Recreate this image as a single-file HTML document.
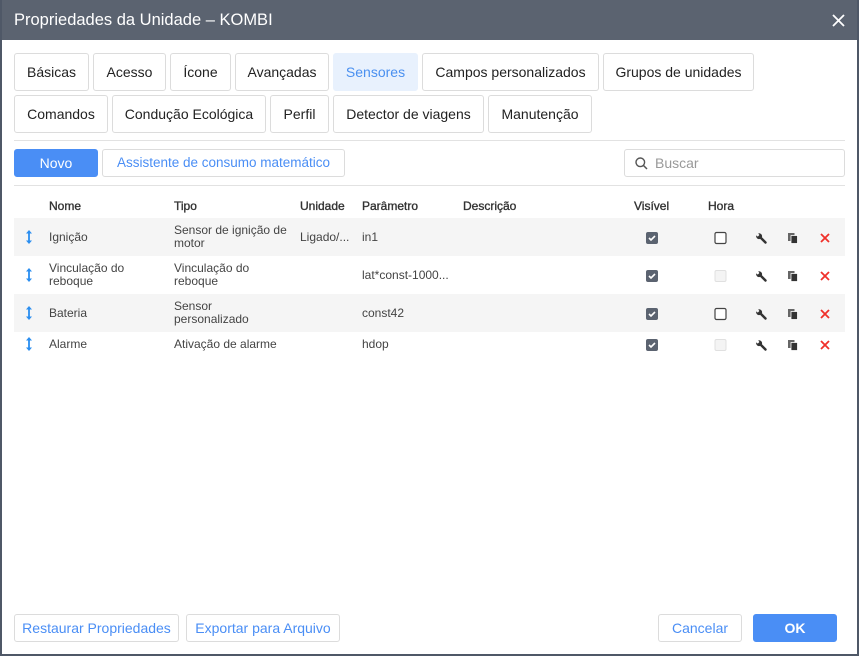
<!DOCTYPE html>
<html><head><meta charset="utf-8"><style>
*{box-sizing:border-box;margin:0;padding:0}
body{width:859px;height:656px;background:#fff;font-family:"Liberation Sans",sans-serif;position:relative;overflow:hidden}
.frame{position:absolute;left:0;top:0;width:859px;height:656px;border:2px solid #4f5867;border-top:none}
.title{position:absolute;left:0;top:0;width:859px;height:40px;background:#5b6370;color:#fff;font-size:16.5px;line-height:40px;padding-left:14px}
.b{position:absolute;border:1px solid #dcdcdc;border-radius:3px;background:#fff;font-size:14px;color:#222;text-align:center}
.t1{top:53px;height:38px;line-height:36px}
.t2{top:95px;height:38px;line-height:36px}
.act{background:#e8f1fd;border-color:#e8f1fd;color:#4a90f0}
.hr{position:absolute;left:14px;width:831px;height:1px;background:#e2e2e2}
.sm{top:149px;height:28px;line-height:26px;font-size:14px}
.blue{background:#4a8ef5;border-color:#4a8ef5;color:#fff}
.lnk{color:#4a8ef5}
.h{position:absolute;top:199px;font-size:12px;color:#333;-webkit-text-stroke:0.35px #333}
.row{position:absolute;left:14px;width:831px}
.g{background:#f5f5f5}
.c{position:absolute;font-size:12px;color:#444;line-height:13px}
</style></head><body>
<div class="title">Propriedades da Unidade – KOMBI</div>
<svg style="position:absolute;left:832px;top:14px" width="13" height="13"><path d="M1,1 L12,12 M12,1 L1,12" stroke="#fff" stroke-width="1.8"/></svg>
<div class="frame"></div>

<div class="b t1" style="left:14px;width:75px">Básicas</div>
<div class="b t1" style="left:93px;width:73px">Acesso</div>
<div class="b t1" style="left:170px;width:61px">Ícone</div>
<div class="b t1" style="left:235px;width:94px">Avançadas</div>
<div class="b t1 act" style="left:333px;width:85px">Sensores</div>
<div class="b t1" style="left:422px;width:177px">Campos personalizados</div>
<div class="b t1" style="left:603px;width:151px">Grupos de unidades</div>
<div class="b t2" style="left:14px;width:94px">Comandos</div>
<div class="b t2" style="left:112px;width:154px">Condução Ecológica</div>
<div class="b t2" style="left:270px;width:59px">Perfil</div>
<div class="b t2" style="left:333px;width:151px">Detector de viagens</div>
<div class="b t2" style="left:488px;width:104px">Manutenção</div>
<div class="hr" style="top:140px"></div>
<div class="b sm blue" style="left:14px;width:84px">Novo</div>
<div class="b sm lnk" style="left:102px;width:243px;font-size:13.5px">Assistente de consumo matemático</div>
<div class="b sm" style="left:624px;width:221px;text-align:left;padding-left:30px;color:#999">Buscar
<svg style="position:absolute;left:10px;top:7px" width="13" height="13" viewBox="0 0 13 13"><circle cx="5.3" cy="5.3" r="4.3" fill="none" stroke="#555" stroke-width="1.4"/><line x1="8.5" y1="8.5" x2="12" y2="12" stroke="#555" stroke-width="1.5"/></svg></div>
<div class="hr" style="top:185px"></div>

<div class="h" style="left:49px">Nome</div>
<div class="h" style="left:174px">Tipo</div>
<div class="h" style="left:300px">Unidade</div>
<div class="h" style="left:362px">Parâmetro</div>
<div class="h" style="left:463px">Descrição</div>
<div class="h" style="left:634px">Visível</div>
<div class="h" style="left:708px">Hora</div>

<div class="row g" style="top:218px;height:38px"></div>
<div class="row" style="top:256px;height:38px"></div>
<div class="row g" style="top:294px;height:38px"></div>

<div class="c" style="left:49px;top:231px">Ignição</div>
<div class="c" style="left:174px;top:224px">Sensor de ignição de<br>motor</div>
<div class="c" style="left:300px;top:231px">Ligado/...</div>
<div class="c" style="left:362px;top:231px">in1</div>

<div class="c" style="left:49px;top:262px">Vinculação do<br>reboque</div>
<div class="c" style="left:174px;top:262px">Vinculação do<br>reboque</div>
<div class="c" style="left:362px;top:269px">lat*const-1000...</div>

<div class="c" style="left:49px;top:307px">Bateria</div>
<div class="c" style="left:174px;top:300px">Sensor<br>personalizado</div>
<div class="c" style="left:362px;top:307px">const42</div>

<div class="c" style="left:49px;top:338px">Alarme</div>
<div class="c" style="left:174px;top:338px">Ativação de alarme</div>
<div class="c" style="left:362px;top:338px">hdop</div>

<svg width="859" height="656" style="position:absolute;left:0;top:0">
<defs>
<g id="ar"><path d="M0,-7 L-3,-3.5 H3 Z M0,7 L-3,3.5 H3 Z" fill="#2a8ef0"/><rect x="-0.9" y="-4" width="1.8" height="8" fill="#2a8ef0"/></g>
<g id="wr"><path d="M4.5,4.5 L-0.5,-0.5" stroke="#333" stroke-width="2.4" stroke-linecap="round"/><path d="M-1.2,1 A3,3 0 0 1 -4.8,-2.6 L-3.2,-1.4 L-1.6,-3 L-2.8,-4.6 A3,3 0 0 1 1,-1 Z" fill="#333"/></g>
<g id="cp"><rect x="-5" y="-5" width="6.5" height="8" fill="#666"/><rect x="-2" y="-2.5" width="6.5" height="8" fill="#333" stroke="#fff" stroke-width="0.8"/></g>
<g id="x"><path d="M-4,-4 L4,4 M4,-4 L-4,4" stroke="#f0302a" stroke-width="1.8"/></g>
<g id="ck"><rect x="-6" y="-6" width="12" height="12" rx="2" fill="#5b6370"/><path d="M-3,0 L-1,2 L3,-2" stroke="#fff" stroke-width="1.6" fill="none"/></g>
</defs>
<use href="#ar" x="29" y="237"/><use href="#ar" x="29" y="275"/><use href="#ar" x="29" y="313"/><use href="#ar" x="29" y="344"/>
<use href="#wr" x="761" y="238"/><use href="#wr" x="761" y="276"/><use href="#wr" x="761" y="314"/><use href="#wr" x="761" y="345"/>
<use href="#cp" x="793" y="238"/><use href="#cp" x="793" y="276"/><use href="#cp" x="793" y="314"/><use href="#cp" x="793" y="345"/>
<use href="#x" x="825" y="238"/><use href="#x" x="825" y="276"/><use href="#x" x="825" y="314"/><use href="#x" x="825" y="345"/>
<use href="#ck" x="652" y="238"/><use href="#ck" x="652" y="276"/><use href="#ck" x="652" y="314"/><use href="#ck" x="652" y="345"/>
<rect x="715" y="232.5" width="11" height="11" rx="1.5" fill="#fff" stroke="#444" stroke-width="1.2"/>
<rect x="715" y="308.5" width="11" height="11" rx="1.5" fill="#fff" stroke="#444" stroke-width="1.2"/>
<rect x="715" y="270.5" width="11" height="11" rx="1.5" fill="#f4f4f4" stroke="#e0e0e0"/>
<rect x="715" y="339.5" width="11" height="11" rx="1.5" fill="#f4f4f4" stroke="#e0e0e0"/>
</svg>

<div class="b lnk" style="left:14px;top:614px;width:165px;height:28px;line-height:26px">Restaurar Propriedades</div>
<div class="b lnk" style="left:186px;top:614px;width:154px;height:28px;line-height:26px">Exportar para Arquivo</div>
<div class="b lnk" style="left:658px;top:614px;width:84px;height:28px;line-height:26px">Cancelar</div>
<div class="b blue" style="left:753px;top:614px;width:84px;height:28px;line-height:26px;font-weight:bold">OK</div>
</body></html>
